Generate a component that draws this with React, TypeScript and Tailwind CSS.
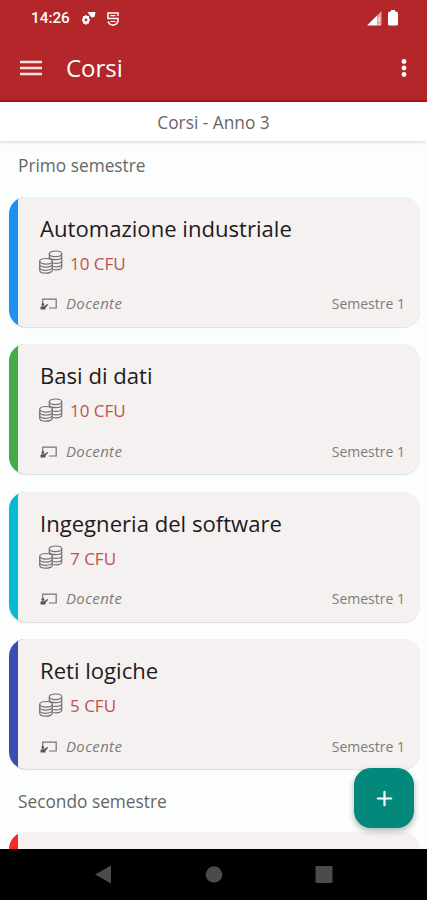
import { Plus } from 'lucide-react';

interface Course {
  name: string;
  cfu: number;
  semester: number;
  color: string;
}

const firstSemester: Course[] = [
  { name: 'Automazione industriale', cfu: 10, semester: 1, color: 'bg-[#1e90ef]' },
  { name: 'Basi di dati', cfu: 10, semester: 1, color: 'bg-[#43ab48]' },
  { name: 'Ingegneria del software', cfu: 7, semester: 1, color: 'bg-[#06bad2]' },
  { name: 'Reti logiche', cfu: 5, semester: 1, color: 'bg-[#3b4cb2]' },
];

function CoinsIcon() {
  return (
    <svg viewBox="0 0 24 24" className="w-6 h-6 shrink-0 -mt-[3px]" fill="none" stroke="#777272" strokeWidth="1.2">
      <ellipse cx="16.5" cy="3.8" rx="6.2" ry="2.8" />
      <path d="M10.3 3.8v5M22.7 3.8v13.2c0 1.7-2.8 2.8-5.8 2.8-1 0-2-.1-2.8-.3" />
      <path d="M10.3 7c.4 1.7 3 2.7 6.2 2.7s6.2-1 6.2-2.7M13.500 13c1 .3 2.100.4 3.300.4 3 0 5.900-1 5.900-2.700M13.800 16.500c1 .3 1.800.4 3 .4 3 0 5.900-1 5.900-2.700" />
      <ellipse cx="7" cy="11.3" rx="6.3" ry="2.8" fill="#f6f1f1" />
      <path d="M.7 11.3v9c0 1.7 3 2.9 6.3 2.9s6.3-1.2 6.3-2.9v-9" />
      <path d="M.7 14.3c0 1.7 3 2.8 6.3 2.8s6.3-1.1 6.3-2.8M.7 17.5c0 1.7 3 2.8 6.3 2.8s6.3-1.1 6.3-2.8" />
    </svg>
  );
}

function TeacherIcon() {
  return (
    <svg viewBox="0 0 17 12" className="w-[17px] h-3 shrink-0 mt-px" fill="none" stroke="#777272" strokeWidth="1.2">
      <path d="M2.7 5V1.2h13.5v8.8H9" />
      <circle cx="2.9" cy="6.5" r="1.4" fill="#555" stroke="none" />
      <path d="M.5 11.500V9.700c0-.8.600-1.400 1.400-1.400h2L7.500 6l.7.800-2.700 3v1.700z" fill="#555" stroke="none" />
    </svg>
  );
}

function CourseCard({ course }: { course: Course }) {
  return (
    <div className="h-[130px] shrink-0 rounded-[17px] overflow-hidden flex bg-[#f6f1f1] shadow-[0_1px_1px_rgba(0,0,0,0.13)]">
      <div className={`w-[14px] -mr-[5px] shrink-0 ${course.color}`}></div>
      <div className="flex-1 bg-[#f6f1f1] rounded-l-[4px] pl-[22px] pr-[15px] flex flex-col">
        <h2 className="mt-4 text-[22.1px] leading-[30px] text-[#1d1b20]">{course.name}</h2>
        <div className="mt-[9px] h-6 flex items-center gap-[7px] -ml-px">
          <CoinsIcon />
          <span className="text-[17px] leading-6 text-[#bd5151]">{course.cfu} CFU</span>
        </div>
        <div className="mt-[18px] h-5 flex items-center text-[14px] text-[#7f7b7b]">
          <TeacherIcon />
          <span className="ml-[9px] italic text-[15px] tracking-[0.35px]">Docente</span>
          <span className="ml-auto">Semestre {course.semester}</span>
        </div>
      </div>
    </div>
  );
}

function StatusBar() {
  return (
    <div className="h-[37px] flex items-center pl-[31px] pr-[29px] text-white">
      <span className="font-['Roboto'] font-medium text-[15.3px] leading-none">14:26</span>
      <svg viewBox="0 0 15 15" className="ml-[11px] w-[15px] h-[15px]" fill="#fff">
        <path d="M6.5 1h8l-1 5-3 .5-2-2.5z" />
        <path fillRule="evenodd" d="M5 3.800l1.200 1.200 1.700.1.100 1.900L9.200 9 8 10.800l-.1 1.800-1.700.1L5 13.900l-1.300-1.200-1.700-.1-.1-1.800L.7 9l1.200-2L2 5.100l1.700-.1zM5 7.500a1.400 1.400 0 1 0 0 2.800 1.400 1.400 0 0 0 0-2.800z" />
      </svg>
      <svg viewBox="0 0 12 14" className="ml-[11px] w-3 h-3.5" fill="none" stroke="#fff" strokeWidth="1.5">
        <path d="M11 4V1H1v5.500h10v3L9.500 12 6 13.200 2.500 12 1 9.500" />
        <path d="M3.500 3.700h5M3.500 9.500h5" strokeWidth="1.2" />
      </svg>
      <svg viewBox="0 0 15 15" className="ml-auto w-[15px] h-[15px]" fill="#fff">
        <path d="M0 14.500L10 4.500v10z" />
        <path d="M10 4.500L14.500 0v14.500H10z" opacity=".55" />
        <path d="M11.500 6h1.500v5h-1.500zM11.500 12.500h1.500v2h-1.500z" opacity=".7" />
      </svg>
      <svg viewBox="0 0 10 16" className="ml-[6px] -mt-px w-2.5 h-4" fill="#fff">
        <path d="M3 0h4v1.500h1A2 2 0 0 1 10 3.500V14a1.500 1.500 0 0 1-1.500 1.500h-7A1.500 1.500 0 0 1 0 14V3.500a2 2 0 0 1 2-2h1z" />
      </svg>
    </div>
  );
}

export default function App() {
  return (
    <div className="relative h-[900px] w-full flex flex-col overflow-hidden bg-[#fbfefd] font-['Open_Sans','Noto_Sans',sans-serif]">
      <header className="h-[102px] shrink-0 bg-[#b3272b] border-b-2 border-[#aa1218]">
        <StatusBar />
        <div className="h-[62px] flex items-center pl-5 pr-[20px] text-white">
          <svg viewBox="0 0 22 16" className="w-[22px] h-4" stroke="#fbdede" strokeWidth="2.4">
            <path d="M0 2h22M0 8h22M0 14h22" />
          </svg>
          <h1 className="ml-6 text-[24px] leading-none">Corsi</h1>
          <svg viewBox="0 0 6 20" className="ml-auto w-[6px] h-5" fill="#fff">
            <circle cx="3" cy="3.5" r="2.4" />
            <circle cx="3" cy="10" r="2.4" />
            <circle cx="3" cy="16.5" r="2.4" />
          </svg>
        </div>
      </header>

      <div className="h-[39px] pt-[2px] shrink-0 bg-white shadow-[0_1px_4px_rgba(0,0,0,0.16)] flex items-center justify-center text-[17.3px] text-[#666]">
        Corsi - Anno 3
      </div>

      <main className="flex-1 min-h-0 overflow-hidden flex flex-col pl-[9px] pr-[7px] text-[#666]">
        <h3 className="mt-[13px] ml-[9px] h-6 shrink-0 text-[17.3px] leading-6">Primo semestre</h3>
        <div className="mt-[18.5px] shrink-0 flex flex-col gap-[17.6px]">
          {firstSemester.map((course) => (
            <CourseCard key={course.name} course={course} />
          ))}
        </div>
        <h3 className="mt-[21px] ml-[9px] h-6 shrink-0 text-[17.3px] leading-6">Secondo semestre</h3>
        {/* first card of the second semester, cut by the nav bar */}
        <div className="mt-[18px] h-[130px] shrink-0 rounded-[17px] overflow-hidden flex bg-[#f6f1f1]">
          <div className="w-[9px] bg-[#f52a26]"></div>
        </div>
      </main>

      <nav className="h-[51px] shrink-0 bg-black">
        <svg viewBox="0 0 427 51" className="w-full h-full" fill="#4b4b4b">
          <path d="M95 25.500L111 16.500v18z" />
          <circle cx="214" cy="25.5" r="8.3" />
          <rect x="315.5" y="17" width="17" height="17" rx="1" />
        </svg>
      </nav>

      <button className="absolute left-[354px] top-[768px] w-[60px] h-[60px] rounded-[17px] bg-[#02897b] text-white flex items-center justify-center shadow-[0_3px_6px_rgba(0,0,0,0.3)]">
        <Plus className="w-[23px] h-[23px]" strokeWidth={2.3} />
      </button>
    </div>
  );
}
